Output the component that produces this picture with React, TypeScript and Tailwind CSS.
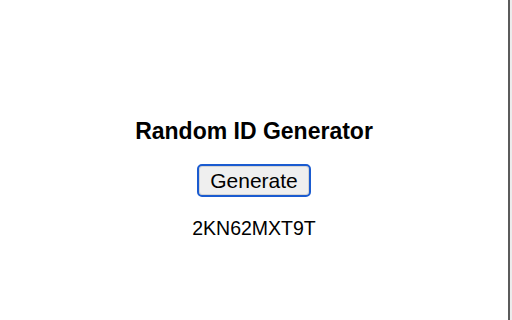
import { useState } from "react";

const CHARS = "ABCDEFGHJKLMNPQRSTUVWXYZ23456789";

function makeId(len = 10) {
  let out = "";
  for (let i = 0; i < len; i++) out += CHARS[Math.floor(Math.random() * CHARS.length)];
  return out;
}

export default function App() {
  const [id, setId] = useState("2KN62MXT9T");

  return (
    <div className="flex h-[320px] w-[512px] bg-white font-['Liberation_Sans',Arial,sans-serif] text-black">
      <main className="flex flex-1 flex-col items-center pt-[118px]">
        <h2 className="text-[23px] font-bold leading-[26px]">Random ID Generator</h2>
        <button
          type="button"
          onClick={() => setId(makeId())}
          className="mt-[20px] rounded-[5px] border-2 border-[#1a5bd0] bg-[#efefef] px-[11px] py-[3px] text-[21px] leading-[23px] shadow-[inset_0_0_0_1px_#d4d4d4]"
        >
          Generate
        </button>
        <p className="mt-[20px] text-[19.5px] leading-[22px]">{id}</p>
      </main>
      <div className="w-[2px] bg-[#5b5b5b]" />
      <div className="w-[2px] bg-[#ececec]" />
    </div>
  );
}
